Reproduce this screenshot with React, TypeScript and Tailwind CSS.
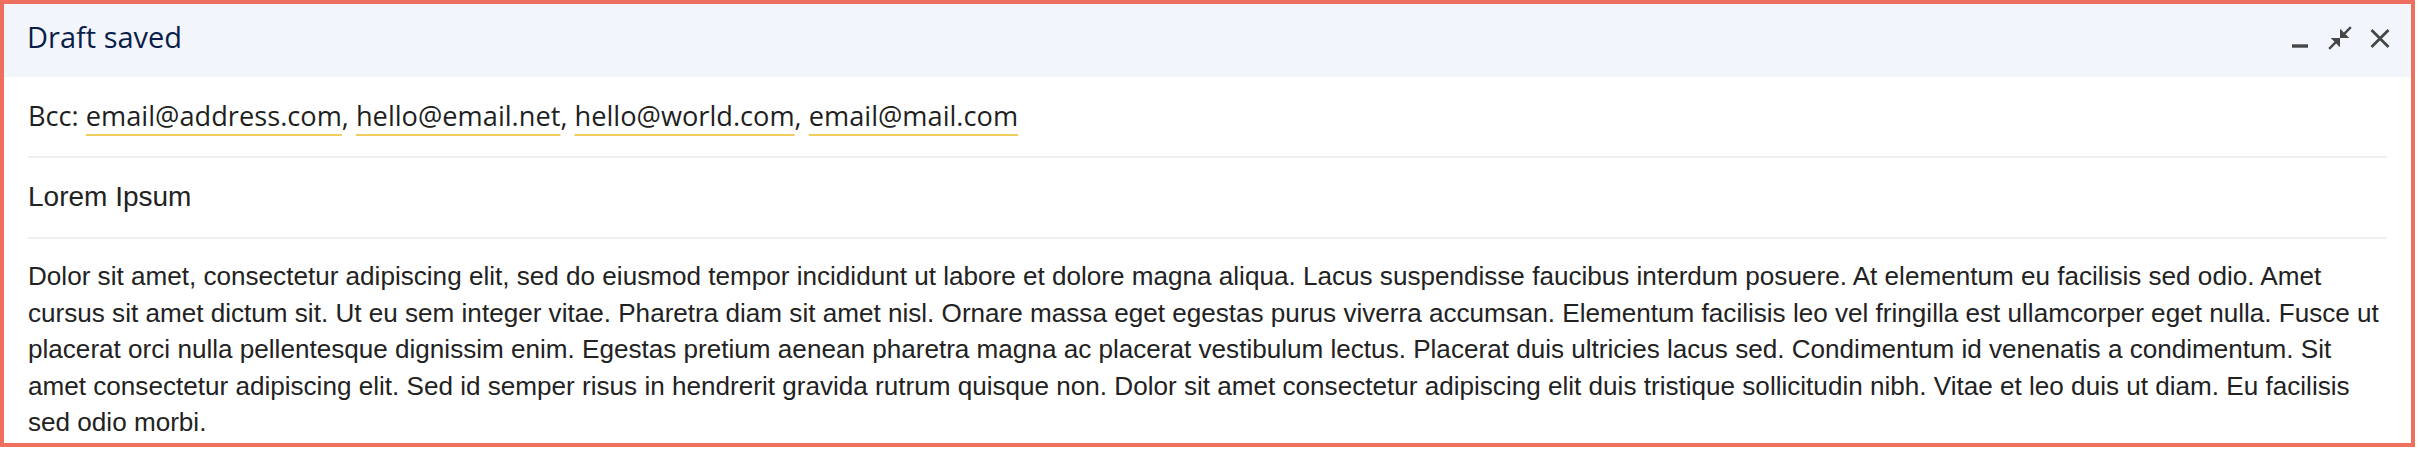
import React from "react";

const emails = ["email@address.com", "hello@email.net", "hello@world.com", "email@mail.com"];

const body =
  "Dolor sit amet, consectetur adipiscing elit, sed do eiusmod tempor incididunt ut labore et dolore magna aliqua. Lacus suspendisse faucibus interdum posuere. At elementum eu facilisis sed odio. Amet cursus sit amet dictum sit. Ut eu sem integer vitae. Pharetra diam sit amet nisl. Ornare massa eget egestas purus viverra accumsan. Elementum facilisis leo vel fringilla est ullamcorper eget nulla. Fusce ut placerat orci nulla pellentesque dignissim enim. Egestas pretium aenean pharetra magna ac placerat vestibulum lectus. Placerat duis ultricies lacus sed. Condimentum id venenatis a condimentum. Sit amet consectetur adipiscing elit. Sed id semper risus in hendrerit gravida rutrum quisque non. Dolor sit amet consectetur adipiscing elit duis tristique sollicitudin nibh. Vitae et leo duis ut diam. Eu facilisis sed odio morbi.";

export default function App() {
  return (
    <div className="w-[2415px] h-[447px] border-4 border-[#ef6f5f] bg-white overflow-hidden flex flex-col">
      <div className="h-[73px] shrink-0 bg-[#f2f6fc] flex justify-between items-start pl-[23px] pr-[17px]">
        <div className="pt-[15px] text-[29px] leading-[36px] text-[#0b1d49] font-['Open_Sans',sans-serif]">
          Draft saved
        </div>
        <div className="flex items-start pt-[20px]">
          <svg width="24" height="28" viewBox="0 0 24 28" className="text-[#444746]">
            <rect x="4" y="20.3" width="16" height="3.4" fill="currentColor" />
          </svg>
          <svg width="28" height="28" viewBox="0 0 24 24" className="ml-[14px] text-[#444746]">
            <path
              fill="currentColor"
              d="M22 3.41 16.71 8.7 20 12h-8V4l3.29 3.29L20.59 2 22 3.41zM3.41 22l5.29-5.29L12 20v-8H4l3.29 3.29L2 20.59 3.41 22z"
            />
          </svg>
          <svg width="30" height="28" viewBox="0 0 30 28" className="ml-[10px] text-[#444746]">
            <path
              d="M7.5 6 L24.5 23 M24.5 6 L7.5 23"
              stroke="currentColor"
              strokeWidth="2.8"
              fill="none"
            />
          </svg>
        </div>
      </div>

      <div className="mx-6 pt-[21px] pb-[22px] border-b-2 border-[#efefef] text-[27.2px] leading-[36px] text-[#1f1f1f] font-['Open_Sans',sans-serif] whitespace-nowrap">
        Bcc:{" "}
        {emails.map((e, i) => (
          <React.Fragment key={e}>
            <span className="underline decoration-[#f0cd5c] decoration-2 underline-offset-[8px]">{e}</span>
            {i < emails.length - 1 ? ", " : ""}
          </React.Fragment>
        ))}
      </div>

      <div className="mx-6 pt-[21px] pb-[22px] border-b-2 border-[#efefef] text-[28px] leading-[36px] text-[#222222] font-['Liberation_Sans',Arial,sans-serif]">
        Lorem Ipsum
      </div>

      <div className="mx-6 pt-[19px] text-[26.1px] leading-[36.5px] text-[#222222] font-['Liberation_Sans',Arial,sans-serif]">
        {body}
      </div>
    </div>
  );
}
